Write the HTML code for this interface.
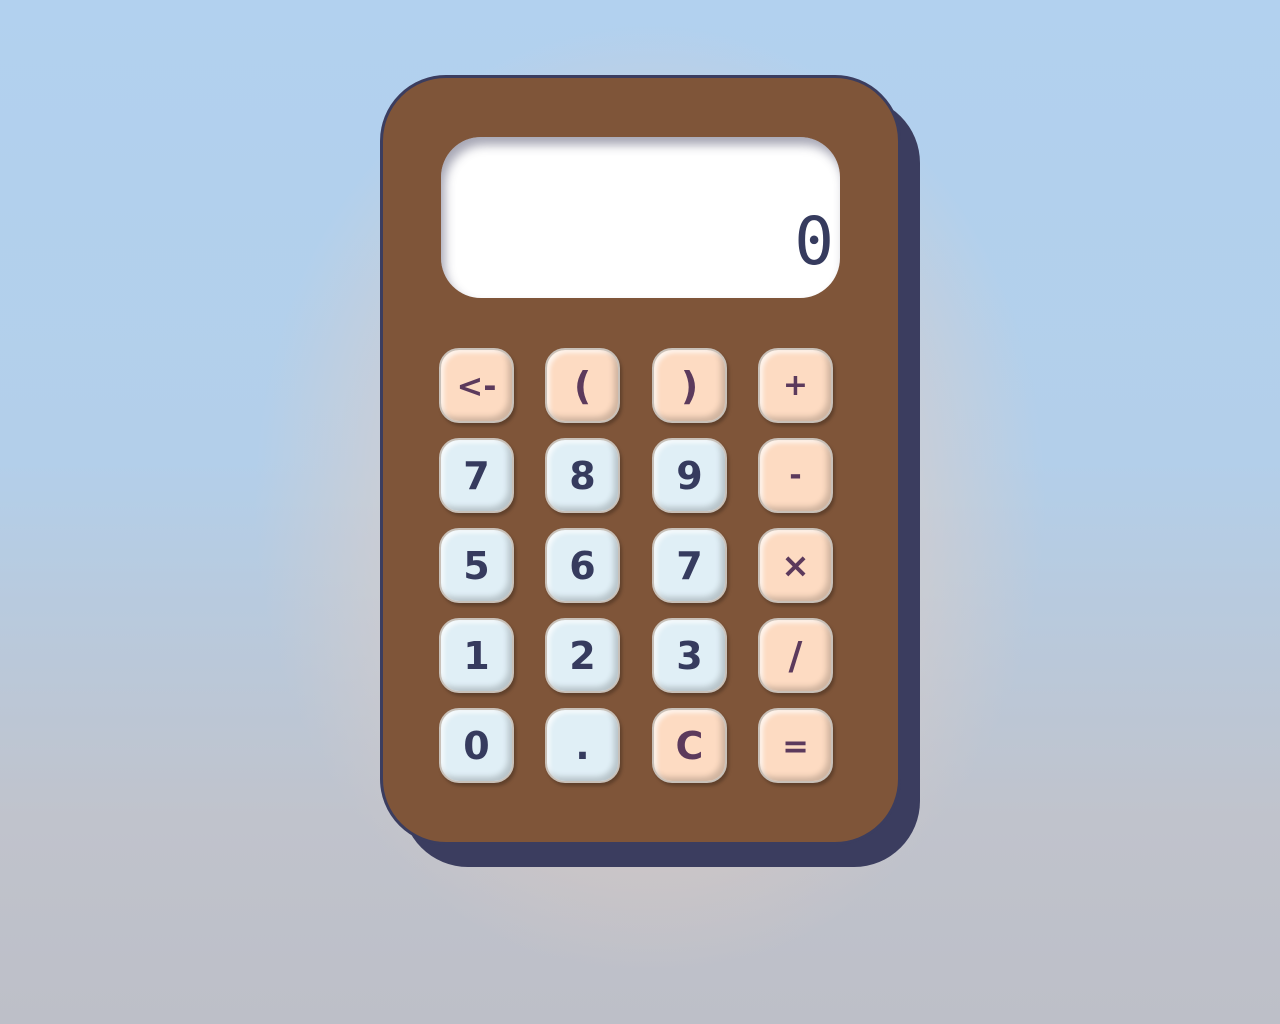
<!DOCTYPE html>
<html><head><style>
html,body{margin:0;height:100%}
body{width:1280px;height:1024px;position:relative;overflow:hidden;
background:linear-gradient(#b2d1ef 0%,#b3cfea 45%,#c0c3cc 80%,#bdbfc8 100%);font-family:"DejaVu Sans","Liberation Sans",sans-serif}
.glow{position:absolute;left:250px;top:20px;width:800px;height:960px;border-radius:50%;
background:radial-gradient(ellipse at center,rgba(228,205,192,.75) 30%,rgba(225,205,195,0) 70%)}
.shadow{position:absolute;left:402px;top:97px;width:518px;height:770px;border-radius:66px;background:#3b3d5f}
.calc{position:absolute;left:380px;top:75px;width:515px;height:764px;border:3px solid #3b3d5f;border-radius:66px;background:#7f5539}
.screen{position:absolute;left:58px;top:59px;width:399px;height:161px;border-radius:40px;background:#fff;
box-shadow:inset 4px 8px 10px rgba(60,60,90,.45)}
.screen span{position:absolute;right:6px;top:70px;font-family:"DejaVu Sans Mono","Liberation Mono",monospace;font-size:66px;line-height:70px;color:#363b5e}
.b{position:absolute;width:75px;height:75px;border-radius:20px;display:flex;align-items:center;justify-content:center;
font-weight:bold;font-size:38px;box-sizing:border-box;border:2px solid #c8c0b8;
box-shadow:inset -4px -4px 6px rgba(0,0,0,.18),inset 3px 3px 4px rgba(255,255,255,.7),2px 3px 3px rgba(0,0,0,.25)}
.n{background:#e0eff6;color:#363b5e}
.o{background:#fddbc2;color:#5c3a5c}
</style></head><body>
<div class="glow"></div>
<div class="shadow"></div>
<div class="calc"><div class="screen"><span>0</span></div></div>
<div class="b o" style="left:439px;top:348px;font-size:32px">&lt;-</div>
<div class="b o" style="left:545px;top:348px">(</div>
<div class="b o" style="left:652px;top:348px">)</div>
<div class="b o" style="left:758px;top:348px;font-size:30px">+</div>
<div class="b n" style="left:439px;top:438px">7</div>
<div class="b n" style="left:545px;top:438px">8</div>
<div class="b n" style="left:652px;top:438px">9</div>
<div class="b o" style="left:758px;top:438px;font-size:30px">-</div>
<div class="b n" style="left:439px;top:528px">5</div>
<div class="b n" style="left:545px;top:528px">6</div>
<div class="b n" style="left:652px;top:528px">7</div>
<div class="b o" style="left:758px;top:528px;font-size:34px">×</div>
<div class="b n" style="left:439px;top:618px">1</div>
<div class="b n" style="left:545px;top:618px">2</div>
<div class="b n" style="left:652px;top:618px">3</div>
<div class="b o" style="left:758px;top:618px">/</div>
<div class="b n" style="left:439px;top:708px">0</div>
<div class="b n" style="left:545px;top:708px">.</div>
<div class="b o" style="left:652px;top:708px">C</div>
<div class="b o" style="left:758px;top:708px;font-size:32px">=</div>
</body></html>
